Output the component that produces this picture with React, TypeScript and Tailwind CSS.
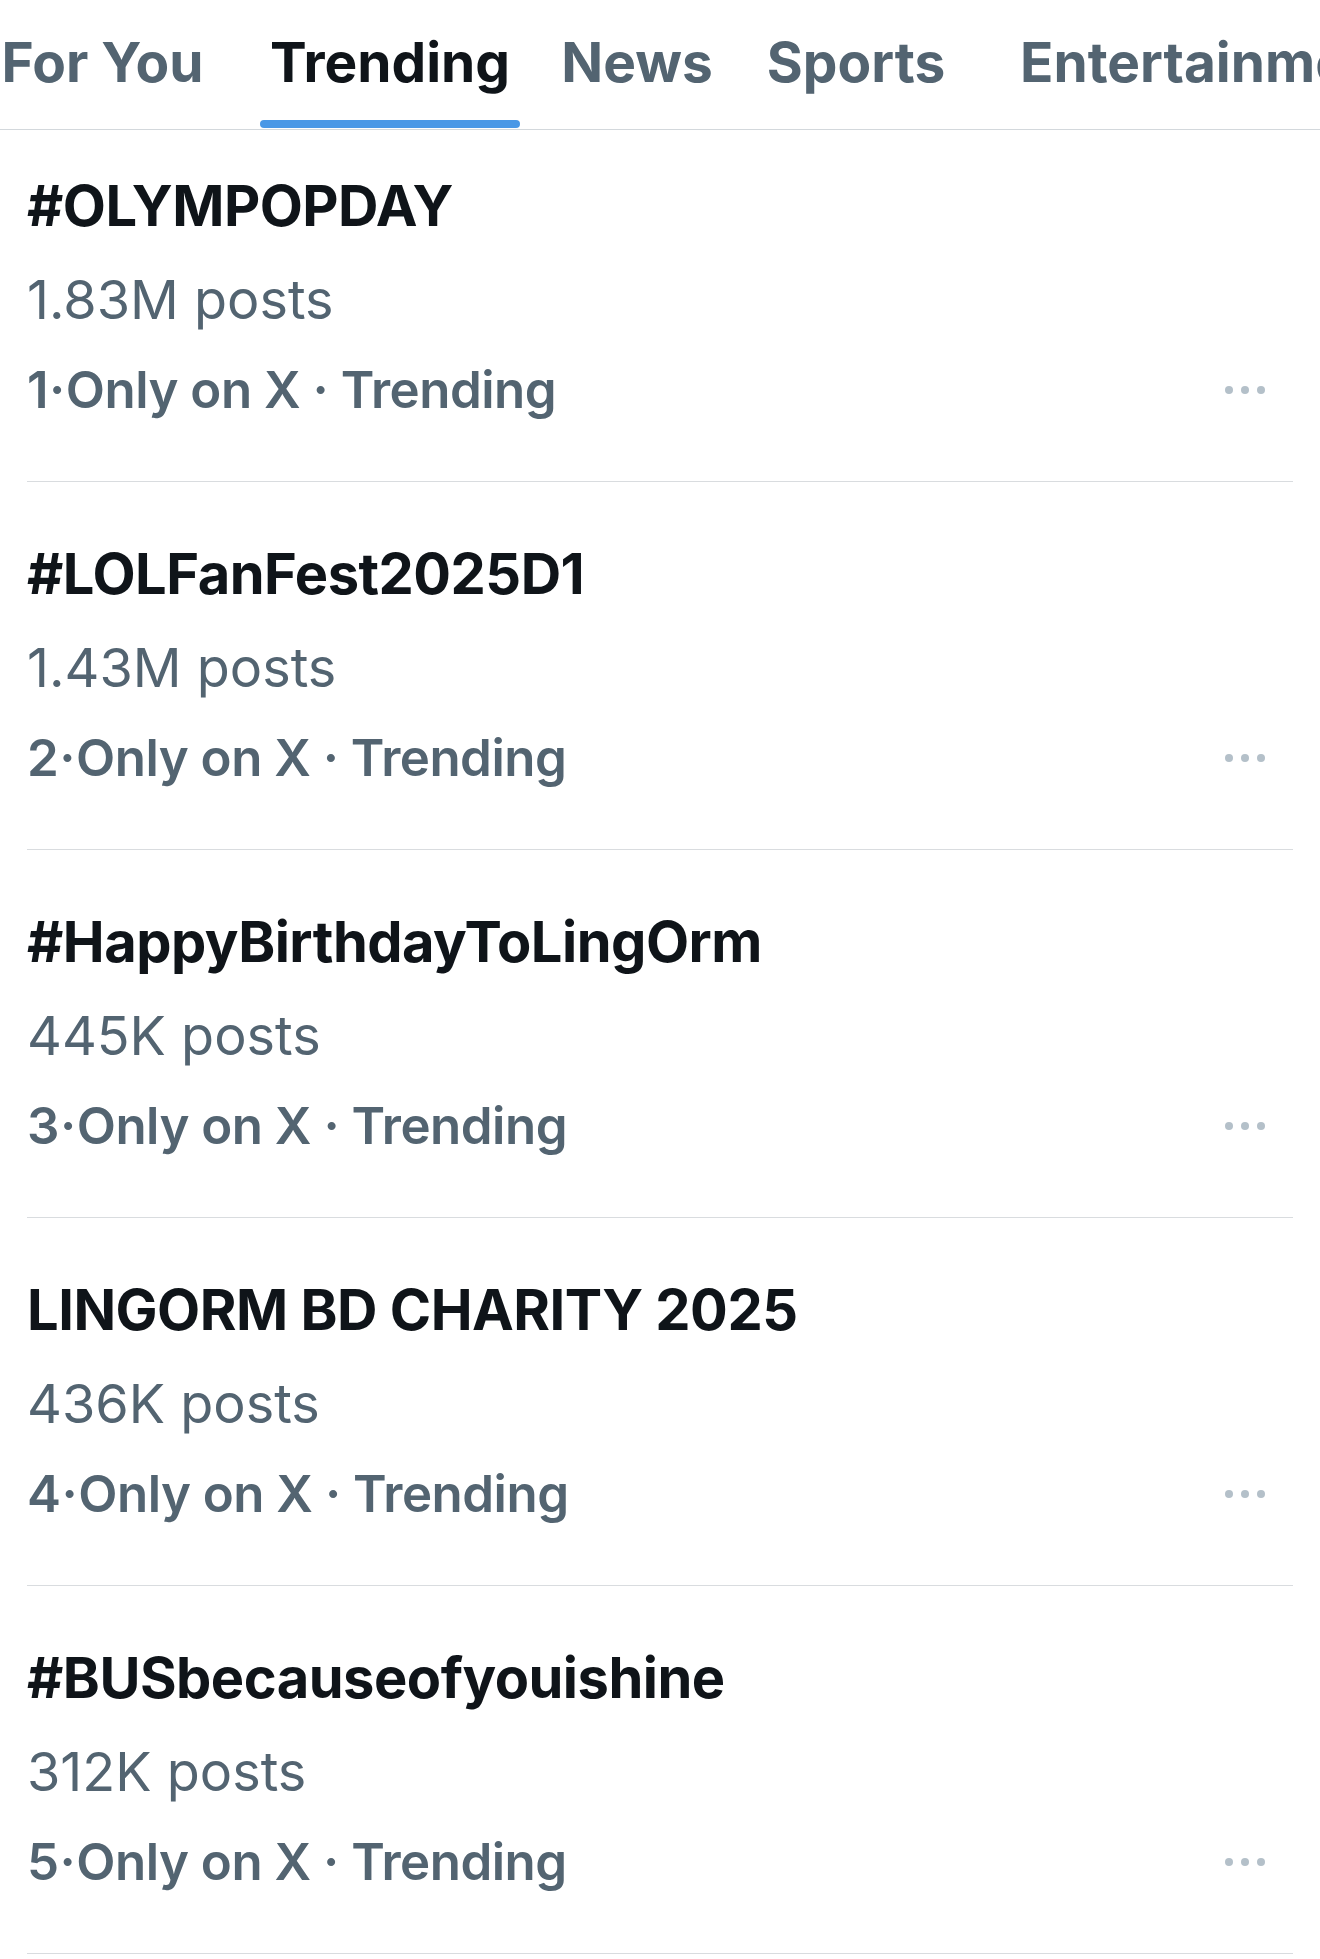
const trends = [
  { rank: 1, name: '#OLYMPOPDAY', posts: '1.83M posts' },
  { rank: 2, name: '#LOLFanFest2025D1', posts: '1.43M posts' },
  { rank: 3, name: '#HappyBirthdayToLingOrm', posts: '445K posts' },
  { rank: 4, name: 'LINGORM BD CHARITY 2025', posts: '436K posts' },
  { rank: 5, name: '#BUSbecauseofyouishine', posts: '312K posts' },
];

function Dots() {
  return (
    <div className="flex items-center gap-[8px] mr-[28px]">
      <span className="w-[8px] h-[8px] rounded-full bg-[#b4c0c9]" />
      <span className="w-[8px] h-[8px] rounded-full bg-[#b4c0c9]" />
      <span className="w-[8px] h-[8px] rounded-full bg-[#b4c0c9]" />
    </div>
  );
}

function TrendRow({ rank, name, posts, first }: { rank: number; name: string; posts: string; first: boolean }) {
  return (
    <div className={`mx-[27px] border-b border-[#d9dcdf] pb-[66px] ${first ? 'pt-[48px]' : 'pt-[64px]'}`}>
      <div className="text-[56px] leading-[56px] font-bold text-[#0f1419] tracking-[-0.5px]">{name}</div>
      <div className="mt-[39px] text-[54px] leading-[54px] text-[#536471]">{posts}</div>
      <div className="mt-[37px] flex items-center justify-between">
        <span className="text-[51px] leading-[51px] font-semibold text-[#536471] tracking-[-0.5px]">
          {rank}<span className="mx-[1px]">·</span>Only on X · Trending
        </span>
        <Dots />
      </div>
    </div>
  );
}

export default function App() {
  return (
    <div className="min-h-screen bg-white" style={{ fontFamily: 'Inter, "Liberation Sans", sans-serif' }}>
      {/* tab bar, last tab runs off the edge */}
      <div className="h-[130px] border-b border-[#d3d8dc] overflow-hidden flex items-end whitespace-nowrap">
        <div className="w-[197px] shrink-0 ml-[4px] h-full flex flex-col items-center justify-end">
          <span className="text-[55px] leading-[55px] font-bold text-[#536471] mb-[39px]">For You</span>
        </div>
        <div className="w-[260px] shrink-0 ml-[59px] h-full flex flex-col items-center justify-end">
          <span className="text-[55px] leading-[55px] font-bold text-[#0f1419] mb-[30px]">Trending</span>
          <span className="w-full h-[8px] rounded-full bg-[#4a98e6] mb-[1px]" />
        </div>
        <div className="w-[160px] shrink-0 ml-[37px] h-full flex flex-col items-center justify-end">
          <span className="text-[55px] leading-[55px] font-bold text-[#536471] mb-[39px]">News</span>
        </div>
        <div className="w-[190px] shrink-0 ml-[44px] h-full flex flex-col items-center justify-end">
          <span className="text-[55px] leading-[55px] font-bold text-[#536471] mb-[39px]">Sports</span>
        </div>
        <div className="shrink-0 ml-[69px] h-full flex flex-col justify-end">
          <span className="text-[55px] leading-[55px] font-bold text-[#536471] mb-[39px]">Entertainment</span>
        </div>
      </div>
      {trends.map((t, i) => (
        <TrendRow key={t.rank} rank={t.rank} name={t.name} posts={t.posts} first={i === 0} />
      ))}
    </div>
  );
}
